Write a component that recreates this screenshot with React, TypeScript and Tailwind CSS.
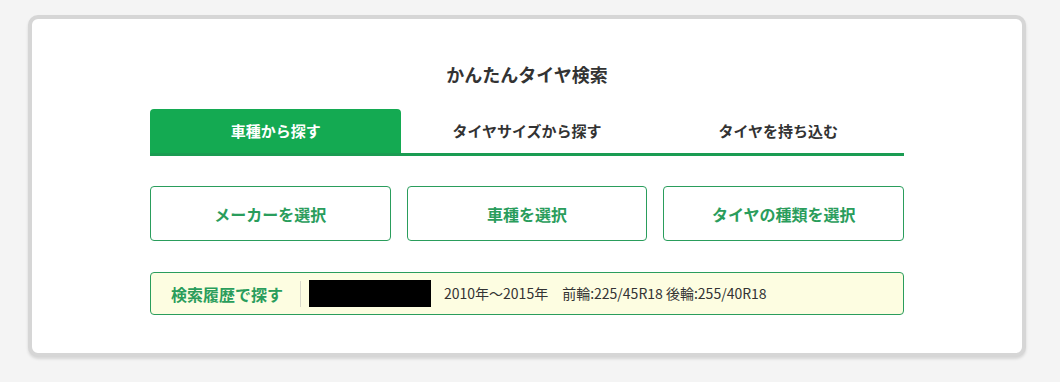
import React from 'react';

const tabs = ['車種から探す', 'タイヤサイズから探す', 'タイヤを持ち込む'];
const selects = ['メーカーを選択', '車種を選択', 'タイヤの種類を選択'];

const App: React.FC = () => {
  return (
    <div
      className="w-[1060px] h-[382px] bg-[#f4f4f4] pt-[15px] pl-[28px]"
      style={{ fontFamily: '"Noto Sans CJK JP", "Noto Sans", sans-serif' }}
    >
      <div className="w-[998px] h-[342px] bg-white border-4 border-[#d6d6d6] rounded-[10px] shadow-[0_2px_3px_rgba(0,0,0,0.12)] pt-[41px] px-[118px]">
        <h2 className="text-center text-[18px] leading-[28px] font-bold text-[#333]">かんたんタイヤ検索</h2>

        {/* tabs */}
        <div className="mt-[21px] grid grid-cols-3 border-b-[3px] border-[#1a9c52]">
          {tabs.map((t, i) => (
            <div
              key={t}
              className={
                i === 0
                  ? 'h-[44px] flex items-center justify-center rounded-t-[4px] bg-[#14aa52] text-white text-[15px] font-bold'
                  : 'h-[44px] flex items-center justify-center text-[#333] text-[15px] font-bold'
              }
            >
              {t}
            </div>
          ))}
        </div>

        {/* select buttons */}
        <div className="mt-[30px] grid grid-cols-3 gap-[16px]">
          {selects.map((s) => (
            <button
              key={s}
              className="h-[55px] border border-[#2a9d5c] rounded-[4px] bg-white text-[#2a9d5c] text-[16px] font-bold"
            >
              {s}
            </button>
          ))}
        </div>

        {/* history */}
        <div className="mt-[31px] h-[43px] flex items-center border border-[#2a9d5c] rounded-[4px] bg-[#fdfde1]">
          <div className="w-[150px] pl-[20px] text-[16px] font-bold text-[#2a9d5c] border-r border-[#d8d8c8] leading-[26px]">
            検索履歴で探す
          </div>
          <div className="ml-[8px] w-[122px] h-[27px] bg-black" />
          <div className="ml-[13px] text-[14px] text-[#333]">2010年～2015年　前輪:225/45R18 後輪:255/40R18</div>
        </div>
      </div>
    </div>
  );
};

export default App;
